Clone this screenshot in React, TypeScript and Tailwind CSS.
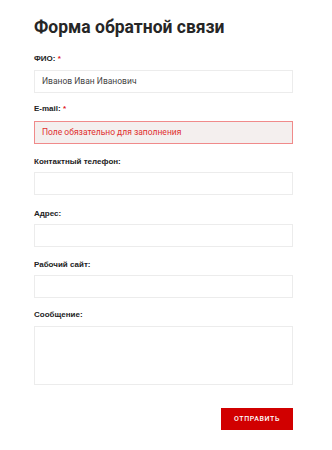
export default function App() {
  const labelCls =
    "text-[8px] leading-[11px] font-bold text-[#222] font-['Liberation_Sans',sans-serif]"

  return (
    <div className="min-h-[450px] bg-white font-['Roboto',sans-serif]">
      <div className="w-[259px] ml-[34px] pt-[16px]">
        <h1 className="text-[17.5px] leading-[22px] font-bold text-[#262626]">Форма обратной связи</h1>

        {/* ФИО */}
        <div className={`mt-[15px] ${labelCls}`}>
          ФИО: <span className="text-[#e0201f]">*</span>
        </div>
        <div className="mt-[6px] h-[23px] border border-[#ececec] px-[7px] flex items-center text-[8.5px] text-[#444]">
          Иванов Иван Иванович
        </div>

        {/* E-mail */}
        <div className={`mt-[10px] ${labelCls}`}>
          E-mail: <span className="text-[#e0201f]">*</span>
        </div>
        <div className="mt-[7px] h-[23px] border border-[#f08a8a] bg-[#f4efee] px-[7px] flex items-center text-[8.5px] text-[#e0302f]">
          Поле обязательно для заполнения
        </div>

        <div className={`mt-[12px] ${labelCls}`}>Контактный телефон:</div>
        <div className="mt-[5px] h-[23px] border border-[#ececec]" />

        <div className={`mt-[13px] ${labelCls}`}>Адрес:</div>
        <div className="mt-[5px] h-[23px] border border-[#ececec]" />

        <div className={`mt-[12px] ${labelCls}`}>Рабочий сайт:</div>
        <div className="mt-[5px] h-[23px] border border-[#ececec]" />

        {/* Сообщение */}
        <div className={`mt-[11px] ${labelCls}`}>Сообщение:</div>
        <div className="mt-[6px] h-[59px] border border-[#ececec]" />

        <div className="flex justify-end mt-[23px]">
          <button className="w-[72px] h-[22px] bg-[#d10000] text-white text-[7px] font-medium tracking-[0.6px] flex items-center justify-center">
            ОТПРАВИТЬ
          </button>
        </div>
      </div>
    </div>
  )
}
